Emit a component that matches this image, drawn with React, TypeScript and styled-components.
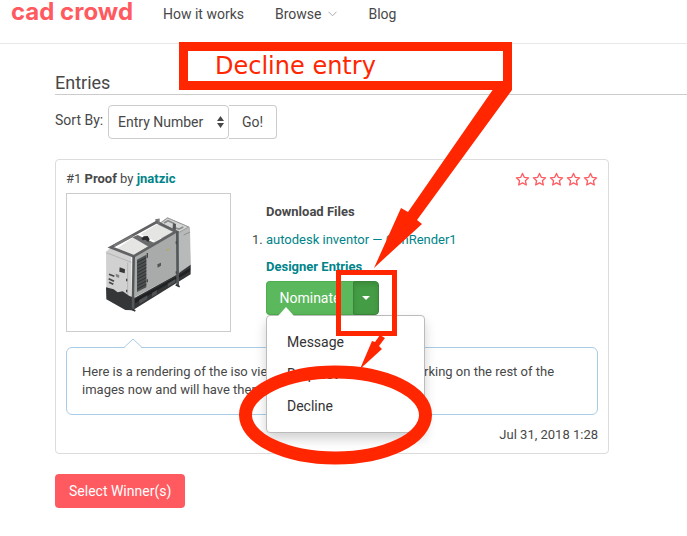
import React from "react";
import styled, { createGlobalStyle } from "styled-components";

const GlobalStyle = createGlobalStyle`
  * { box-sizing: border-box; }
  body {
    margin: 0;
    background: #fff;
    color: #484848;
    font-family: Roboto, "Liberation Sans", sans-serif;
    font-size: 13px;
    line-height: 18px;
  }
  button, select { font: inherit; color: inherit; }
`;

const teal = "#008489";
const coral = "#ff5a5f";
const marker = "#ff2600";

const Page = styled.div`
  position: relative;
  padding-bottom: 28px;
`;

const Header = styled.header`
  display: flex;
  align-items: flex-start;
  height: 44px;
  padding-left: 11px;
  border-bottom: 1px solid #e8e8e8;
`;

const Brand = styled.a`
  width: 152px;
  color: ${coral};
  font-family: Inter, sans-serif;
  font-size: 24px;
  font-weight: 700;
  line-height: 24px;
  text-decoration: none;
  white-space: nowrap;
`;

const Nav = styled.nav`
  display: flex;
  gap: 31px;
  padding-top: 4px;
  font-size: 14px;
  line-height: 20px;
`;

const NavLink = styled.a`
  display: flex;
  align-items: center;
  gap: 7px;
  color: #484848;
  text-decoration: none;
  white-space: nowrap;
`;

const Main = styled.main`
  padding-left: 55px;
`;

const Heading = styled.h2`
  margin: 0 0 10px;
  padding: 28px 0 1px;
  border-bottom: 1px solid #ccc;
  font-size: 18px;
  font-weight: 400;
  line-height: 21px;
`;

const SortForm = styled.form`
  display: flex;
  align-items: flex-start;
  margin-bottom: 20px;
  font-size: 14px;
`;

const SortLabel = styled.label`
  width: 53px;
  line-height: 30px;
  white-space: nowrap;
`;

const SelectWrap = styled.span`
  position: relative;
  display: flex;
`;

const SortSelect = styled.select`
  appearance: none;
  width: 121px;
  height: 34px;
  padding: 0 20px 0 9px;
  border: 1px solid #ccc;
  border-radius: 4px;
  background: #fff;
`;

const SelectArrows = styled.svg`
  position: absolute;
  right: 5px;
  top: 10px;
  pointer-events: none;
`;

const GoButton = styled.button`
  height: 34px;
  padding: 0 13px;
  border: 1px solid #ccc;
  border-left: 0;
  border-radius: 0 4px 4px 0;
  background: #fff;
`;

const Entry = styled.article`
  margin: 0 78px 20px 0;
  padding: 10px 10px 9px;
  border: 1px solid #dcdcdc;
  border-radius: 4px;
`;

const EntryHead = styled.header`
  display: flex;
  justify-content: space-between;
  margin-bottom: 5px;
`;

const EntryTitle = styled.div``;

const UserLink = styled.a`
  color: ${teal};
  font-weight: 700;
  text-decoration: none;
`;

const Stars = styled.div`
  display: flex;
  gap: 2px;
  padding-top: 2px;
`;

const EntryBody = styled.div`
  display: flex;
  align-items: flex-start;
  gap: 35px;
  margin-bottom: 15px;
`;

const Preview = styled.a`
  display: flex;
  align-items: center;
  justify-content: center;
  width: 165px;
  height: 139px;
  border: 1px solid #ccc;
`;

const Files = styled.section`
  padding-top: 10px;
`;

const FilesTitle = styled.h3`
  margin: 0 0 10px;
  font-size: 13px;
  font-weight: 700;
  line-height: 18px;
`;

const DesignerLink = styled(UserLink)`
  display: block;
  margin-bottom: 5px;
`;

const FileList = styled.ol`
  margin: 0 0 9px;
  padding: 0;
`;

const FileLink = styled.a`
  color: ${teal};
  text-decoration: none;
`;

const Actions = styled.div`
  position: relative;
  display: inline-flex;
  font-size: 14px;
`;

const ActionButton = styled.button<{ $toggle?: boolean }>`
  display: flex;
  align-items: center;
  justify-content: center;
  width: ${(p) => (p.$toggle ? "26px" : "87px")};
  height: 34px;
  padding: 0;
  border: 1px solid ${(p) => (p.$toggle ? "#398439" : "#4cae4c")};
  border-right-width: ${(p) => (p.$toggle ? "1px" : "0")};
  border-radius: ${(p) => (p.$toggle ? "0 4px 4px 0" : "4px 0 0 4px")};
  background: ${(p) => (p.$toggle ? "#449d44" : "#5cb85c")};
  color: #fff;
  box-shadow: ${(p) => (p.$toggle ? "inset 0 3px 5px rgba(0, 0, 0, 0.12)" : "none")};
`;

const Menu = styled.ul`
  position: absolute;
  z-index: 1;
  top: 100%;
  left: 0;
  width: 159px;
  margin: 0;
  padding: 10px 0;
  border: 1px solid #bbb;
  border-radius: 4px;
  background: #fff;
  box-shadow: 0 6px 12px rgba(0, 0, 0, 0.18);
  list-style: none;

  &::before {
    content: "";
    position: absolute;
    top: -9px;
    left: 11px;
    border: 8px solid transparent;
    border-top: 0;
    border-bottom: 9px solid #fff;
  }
`;

const MenuItem = styled.button`
  display: block;
  width: 100%;
  height: 32px;
  padding: 0 20px;
  border: 0;
  background: none;
  color: #333;
  text-align: left;
`;

const Comment = styled.p`
  position: relative;
  margin: 0 0 11px;
  padding: 15px 24px 15px 15px;
  border: 1px solid #a9cde6;
  border-radius: 6px;
`;

const CommentTip = styled.svg`
  position: absolute;
  top: -10px;
  left: 56px;
`;

const Timestamp = styled.time`
  display: block;
  text-align: right;
`;

const WinnerButton = styled.button`
  height: 34px;
  padding: 0 14px;
  border: 0;
  border-radius: 4px;
  background: ${coral};
  color: #fff;
  font-size: 14px;
`;

const Callout = styled.div`
  position: absolute;
  z-index: 3;
  top: 42px;
  left: 179px;
  width: 333px;
  height: 48px;
  padding-left: 27px;
  border: 9px solid ${marker};
  color: ${marker};
  background: #fff;
  font-family: "DejaVu Sans", sans-serif;
  font-size: 24px;
  line-height: 30px;
`;

const Markup = styled.svg`
  position: absolute;
  z-index: 2;
  top: 0;
  left: 0;
  pointer-events: none;
`;

const Star = () => (
  <svg width="15" height="15" viewBox="0 0 15 15" fill="none" stroke={coral} strokeWidth="1.3" strokeLinejoin="round">
    <path d="M7.5 1.4 9.3 5.3 13.6 5.8 10.4 8.7 11.3 13 7.5 10.9 3.7 13 4.6 8.7 1.4 5.8 5.7 5.3Z" />
  </svg>
);

const Generator = () => (
  <svg width="100" height="105" viewBox="5 0 300 315" role="img" aria-label="Generator rendering">
    <path d="M183 42 210 22 276 50 280 180 240 205 200 120Z" fill="#aeb0af" />
    <path d="M188 40 211 24 274 51 247 66Z" fill="#d4d5d5" stroke="#999" strokeWidth="3" />
    <path d="M200 39 212 32 229 40 228 52 245 57 258 51" fill="none" stroke="#8a8c8c" strokeWidth="5" />
    <path d="M228 39 236 42 235 64 226 60Z" fill="#555" />
    <path d="M245 70 278 51 280 165 245 184Z" fill="#b8b9b9" />
    <path d="M259 75 278 66" stroke="#8e8f8f" strokeWidth="3" />
    <path d="M112 124 240 63 240 193 112 262Z" fill="#a9abaa" />
    <path d="M26 125 42 111 102 140 104 272 27 238Z" fill="#d0d1d0" />
    <path d="M27 128 102 157M91 158V260" stroke="#b4b5b5" strokeWidth="3" />
    <path d="M26 232 49 238 61 247 76 244 96 258 112 263 240 193 280 164V193L106 301 84 300 27 268Z" fill="#343638" />
    <path d="M113 267 237 200 278 175V184L113 280Z" fill="#1f2123" />
    <path d="M125 271 150 256V267L127 281ZM164 249 179 240 178 253 164 260ZM211 221 234 207V217L213 230Z" fill="#505356" />
    <path d="M57 117 109 82 156 107 109 135Z" fill="#e5e5e4" />
    <path d="M130 73 179 43 226 65 174 94Z" fill="#e5e5e4" />
    <path d="M40 112 178 36 236 65 109 139Z" fill="none" stroke="#606263" strokeWidth="8" />
    <path d="M105 82 121 75 171 99 154 110Z" fill="#696b6c" />
    <path d="M132 86 139 79 151 78 157 88 153 96 144 89 137 91Z" fill="#292b2c" />
    <path d="M174 31 184 29V43M50 108 106 78" fill="none" stroke="#777" strokeWidth="6" />
    <path d="M119 149 147 134V232L119 246Z" fill="#4d5051" />
    <path d="M120 157 147 143M120 167 147 153M120 177 147 163M120 187 147 173M120 197 147 183M120 207 147 193M120 217 147 203M120 227 147 213M120 237 147 223" stroke="#303334" strokeWidth="3" />
    <path d="M109 138 107 301M240 64 241 228" stroke="#555859" strokeWidth="8" />
    <path d="M102 297 114 303M235 224 247 230" stroke="#303334" strokeWidth="5" />
    <path d="M67 172 83 178 82 190 66 185Z" fill="#343638" />
    <path d="M35 193 51 199M34 206 50 214M35 217 48 223" stroke="#454749" strokeWidth="5" />
    <path d="M55 191 66 195 65 204 56 200Z" fill="#828484" />
    <path d="M180 163 191 158V167L181 173Z" fill="#525556" />
    <path d="M150 129V143M150 208V217M237 94V102M237 184V191M88 206V214M88 239V247" stroke="#454749" strokeWidth="4" />
    <path d="M208 121 215 117" stroke="#b5a94f" strokeWidth="4" />
  </svg>
);

export default function App() {
  return (
    <Page>
      <GlobalStyle />
      <Header>
        <Brand href="#">cad crowd</Brand>
        <Nav>
          <NavLink href="#how">How it works</NavLink>
          <NavLink href="#browse">
            Browse
            <svg width="9" height="6" viewBox="0 0 9 6" fill="none" stroke="#aaa">
              <path d="M.5.8 4.5 4.8 8.5.8" />
            </svg>
          </NavLink>
          <NavLink href="#blog">Blog</NavLink>
        </Nav>
      </Header>

      <Main>
        <Heading>Entries</Heading>
        <SortForm onSubmit={(e) => e.preventDefault()}>
          <SortLabel htmlFor="sort">Sort By:</SortLabel>
          <SelectWrap>
            <SortSelect id="sort">
              <option>Entry Number</option>
            </SortSelect>
            <SelectArrows width="7" height="14" viewBox="0 0 7 14" fill="#484848">
              <path d="M0 6 3.5 1 7 6ZM0 8 3.5 13 7 8Z" />
            </SelectArrows>
          </SelectWrap>
          <GoButton type="submit">Go!</GoButton>
        </SortForm>

        <Entry>
          <EntryHead>
            <EntryTitle>
              #1 <b>Proof</b> by <UserLink href="#jnatzic">jnatzic</UserLink>
            </EntryTitle>
            <Stars role="img" aria-label="Not rated">
              {[1, 2, 3, 4, 5].map((n) => (
                <Star key={n} />
              ))}
            </Stars>
          </EntryHead>

          <EntryBody>
            <Preview href="#preview">
              <Generator />
            </Preview>
            <Files>
              <FilesTitle>Download Files</FilesTitle>
              <FileList>
                <li>
                  <FileLink href="#file">autodesk inventor — GenRender1</FileLink>
                </li>
              </FileList>
              <DesignerLink href="#entries">Designer Entries</DesignerLink>
              <Actions>
                <ActionButton type="button">Nominate</ActionButton>
                <ActionButton type="button" $toggle aria-label="More actions" aria-expanded="true">
                  <svg width="8" height="4" viewBox="0 0 8 4" fill="#fff">
                    <path d="M0 0H8L4 4Z" />
                  </svg>
                </ActionButton>
                <Menu>
                  <li><MenuItem type="button">Message</MenuItem></li>
                  <li><MenuItem type="button">Request</MenuItem></li>
                  <li><MenuItem type="button">Decline</MenuItem></li>
                </Menu>
              </Actions>
            </Files>
          </EntryBody>

          <Comment>
            <CommentTip width="20" height="11" viewBox="0 0 20 11">
              <path d="M1 10 10 1 19 10V11H1Z" fill="#fff" />
              <path d="M1 9.5 10 1 19 9.5" fill="none" stroke="#a9cde6" />
            </CommentTip>
            Here is a rendering of the iso view of the generator. I am working on the rest of the
            images now and will have them up soon.
          </Comment>
          <Timestamp>Jul 31, 2018 1:28</Timestamp>
        </Entry>

        <WinnerButton type="button">Select Winner(s)</WinnerButton>
      </Main>

      <Callout>Decline entry</Callout>
      <Markup width="520" height="470" viewBox="0 0 520 470" fill={marker}>
        <path d="M494 88H512V90L417 220 422 224 388 255 374 268 401 208 408 212Z" />
        <path d="M380 335 385 338 379 346 382 349 360 369 372 341 375 342Z" />
        <rect x="338.5" y="272.5" width="56" height="61" fill="none" stroke={marker} strokeWidth="5" />
        <ellipse cx="335.5" cy="415" rx="90" ry="43" fill="none" stroke={marker} strokeWidth="13" />
      </Markup>
    </Page>
  );
}
